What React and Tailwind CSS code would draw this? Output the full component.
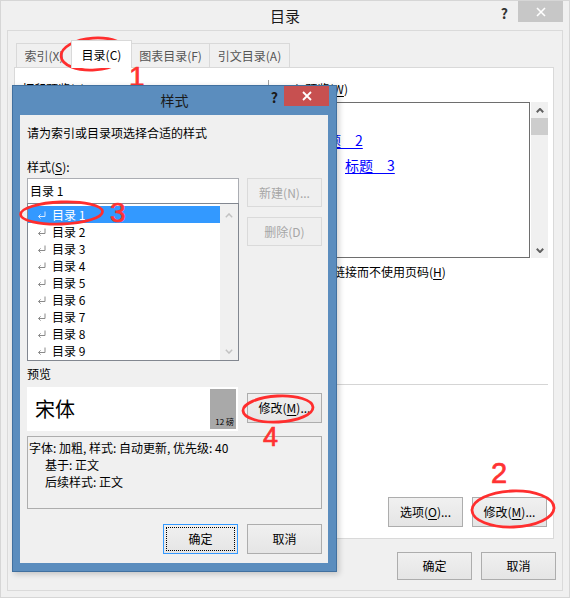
import React from "react";

const U = ({ children }) => (
  <span className="underline underline-offset-2 decoration-1">{children}</span>
);

const XIcon = ({ size = 10, w = 1.6 }) => (
  <svg width={size} height={size} viewBox="0 0 10 10">
    <path d="M1 1L9 9M9 1L1 9" stroke="white" strokeWidth={w} fill="none" />
  </svg>
);

const Chevron = ({ up, w = 8, h = 5, sw = 2, color = "#606060" }) => (
  <svg width={w} height={h} viewBox={`0 0 ${w} ${h}`}>
    <path
      d={up ? `M0.8 ${h - 0.8}L${w / 2} 0.9L${w - 0.8} ${h - 0.8}` : `M0.8 0.8L${w / 2} ${h - 0.9}L${w - 0.8} 0.8`}
      stroke={color}
      strokeWidth={sw}
      fill="none"
    />
  </svg>
);

const Ret = () => (
  <svg width="9" height="8" viewBox="0 0 9 8" className="shrink-0">
    <path d="M8 0.5V5.5H1.5" stroke="currentColor" strokeWidth="1" fill="none" />
    <path d="M3.6 3.4L1.5 5.5L3.6 7.6" stroke="currentColor" strokeWidth="1" fill="none" />
  </svg>
);

function Btn({ children, className = "" }) {
  return (
    <div
      className={
        "flex items-center justify-center w-[75px] border border-[#adadad] bg-linear-to-b from-[#f0f0f0] to-[#e5e5e5] text-[12px] text-black " +
        className
      }
    >
      {children}
    </div>
  );
}

function DisabledBtn({ children, className = "" }) {
  return (
    <div
      className={
        "flex items-center justify-center w-[75px] border border-[#dadada] bg-[#efefef] text-[12px] text-[#a6a6a6] " +
        className
      }
    >
      {children}
    </div>
  );
}

export default function App() {
  const rows = [1, 2, 3, 4, 5, 6, 7, 8, 9];
  return (
    <div className="relative w-[570px] h-[598px] overflow-hidden bg-[#f0f0f0] p-px shadow-[inset_0_0_0_1px_#d6d6d6] text-black font-['Noto_Sans_CJK_SC',sans-serif] text-[12px] leading-[16px]">
      {/* Main title bar */}
      <div className="grid grid-cols-[1fr_auto_1fr] h-[29px]">
        <div />
        <div className="text-[15px] leading-[29px] text-[#1a1a1a]">目录</div>
        <div className="flex justify-end items-start pr-[6px]">
          <span className="font-bold text-[14px] leading-[20px] mt-[2px] mr-[10px] text-[#333]">?</span>
          <div className="w-[45px] h-[21px] bg-[#c7c7c7] flex items-center justify-center">
            <XIcon />
          </div>
        </div>
      </div>

      {/* Main frame */}
      <div className="ml-[6px] w-[556px] h-[561px] border border-[#dadada] flex flex-col">
        {/* Tabs */}
        <div className="flex items-end h-[25px] mt-[11px] ml-[8px]">
          <div className="w-[56px] h-[24px] border border-b-0 border-[#d9d9d9] bg-[#f0f0f0] flex items-center justify-center text-[#555]">
            索引(X)
          </div>
          <div className="relative z-10 -ml-px -mb-px w-[61px] h-[28px] border border-b-0 border-[#d9d9d9] bg-white flex items-center justify-center pt-[1px]">
            目录(C)
          </div>
          <div className="-ml-px w-[79px] h-[24px] border border-b-0 border-[#d9d9d9] bg-[#f0f0f0] flex items-center justify-center text-[#555]">
            图表目录(F)
          </div>
          <div className="-ml-px w-[81px] h-[24px] border border-b-0 border-[#d9d9d9] bg-[#f0f0f0] flex items-center justify-center text-[#555]">
            引文目录(A)
          </div>
        </div>

        {/* Tab panel */}
        <div className="ml-[6px] w-[540px] h-[472px] bg-white border border-[#d9d9d9] flex flex-col">
          <div className="flex h-[316px]">
            <div className="w-[253px] pl-[7px] pt-[13px]">
              打印预览(<U>V</U>)
            </div>
            <div className="w-px h-[20px] mt-[12px] bg-[#a0a0a0]" />
            <div className="flex flex-col pl-[8px] pt-[13px]">
              <div className="ml-[1px]">
                Web 预览(<U>W</U>)
              </div>
              <div className="flex mt-[5px]">
                <div className="w-[253px] h-[156px] border border-[#6e6e6e] pl-[3px] text-[14px] leading-[25px] text-[#0000ff]">
                  <div>
                    <span className="underline underline-offset-2">标题{"\u3000"}1</span>
                  </div>
                  <div className="pl-[32px]">
                    <span className="underline underline-offset-2">标题{"\u3000"}2</span>
                  </div>
                  <div className="pl-[64px]">
                    <span className="underline underline-offset-2">标题{"\u3000"}3</span>
                  </div>
                </div>
                <div className="ml-[1px] w-[17px] h-[156px] bg-[#f0f0f0] flex flex-col">
                  <div className="h-[16px] flex items-center justify-center">
                    <Chevron up />
                  </div>
                  <div className="h-[17px] bg-[#cdcdcd]" />
                  <div className="flex-1" />
                  <div className="h-[16px] flex items-center justify-center">
                    <Chevron />
                  </div>
                </div>
              </div>
              <div className="flex items-center mt-[6px] h-[16px]">
                <div className="ml-[1px] w-[13px] h-[13px] border border-[#333] bg-white" />
                <span className="ml-[6px]">
                  使用超链接而不使用页码(<U>H</U>)
                </span>
              </div>
            </div>
          </div>
          <div className="ml-[7px] w-[526px] h-px bg-[#d5d5d5]" />
          <div className="flex-1" />
          <div className="flex justify-end gap-[9px] pr-[6px] pb-[11px]">
            <Btn className="h-[30px]">
              选项(<U>O</U>)...
            </Btn>
            <Btn className="h-[30px] border-[#4a9de6]">
              修改(<U>M</U>)...
            </Btn>
          </div>
        </div>

        {/* Main bottom buttons */}
        <div className="flex justify-end gap-[9px] mt-[13px] pr-[6px]">
          <Btn className="h-[28px]">确定</Btn>
          <Btn className="h-[28px]">取消</Btn>
        </div>
      </div>

      {/* Annotations under the style dialog */}
      <svg className="absolute left-0 top-0 pointer-events-none" width="570" height="598">
        <ellipse cx="94" cy="54" rx="33" ry="16" stroke="#ff2e2e" strokeWidth="2.8" fill="none" transform="rotate(-4 94 54)" />
        <ellipse cx="513" cy="509" rx="41" ry="18" stroke="#ff2e2e" strokeWidth="2.8" fill="none" transform="rotate(-2 513 509)" />
      </svg>
      <div className="absolute left-[129px] top-[63px] font-['Liberation_Sans',sans-serif] text-[28px] leading-none text-[#ff3333] [-webkit-text-stroke:0.7px_#ff3333]">1</div>
      <div className="absolute left-[491px] top-[459px] font-['Liberation_Sans',sans-serif] text-[29px] leading-none text-[#ff3333] [-webkit-text-stroke:0.7px_#ff3333]">2</div>

      {/* Style dialog */}
      <div className="absolute left-[12px] top-[85px] z-10 w-[325px] h-[487px] bg-[#5b8dbe] border border-[#41709f] shadow-[2px_2px_6px_rgba(0,0,0,0.2)] flex flex-col">
        <div className="grid grid-cols-[1fr_auto_1fr] h-[29px]">
          <div />
          <div className="text-[14px] leading-[29px] text-[#1a1a1a]">样式</div>
          <div className="flex justify-end items-start">
            <span className="font-bold text-[14px] leading-[20px] mt-[1px] mr-[6px] text-[#1a1a1a]">?</span>
            <div className="w-[45px] h-[20px] mr-[7px] bg-[#c75050] flex items-center justify-center">
              <XIcon size={10} w={1.8} />
            </div>
          </div>
        </div>
        <div className="flex-1 ml-[7px] mr-[8px] mb-[8px] bg-[#f0f0f0] flex flex-col pl-[7px] pr-[6px]">
          <div className="mt-[10px]">请为索引或目录项选择合适的样式</div>
          <div className="mt-[18px]">
            样式(<U>S</U>):
          </div>
          <div className="flex mt-[3px]">
            <div className="w-[212px] flex flex-col">
              <div className="h-[25px] border border-b-0 border-[#abadb3] bg-white pl-[2px] leading-[24px]">目录 1</div>
              <div className="h-[158px] border border-[#828790] bg-white flex">
                <div className="flex-1 pt-[2px]">
                  {rows.map((n) => (
                    <div
                      key={n}
                      className={
                        n === 1
                          ? "h-[17px] flex items-center pl-[9px] bg-[#3399ff] text-white"
                          : "h-[17px] flex items-center pl-[9px] text-black"
                      }
                    >
                      <span className={n === 1 ? "text-[#d8e9ff]" : "text-[#8a8a8a]"}>
                        <Ret />
                      </span>
                      <span className="ml-[6px]">目录 {n}</span>
                    </div>
                  ))}
                </div>
                <div className="w-[18px] bg-[#f0f0f0] flex flex-col justify-between items-center pt-[9px] pb-[6px]">
                  <Chevron up w={8} h={5} sw={1.4} color="#c2c2c2" />
                  <Chevron w={8} h={5} sw={1.4} color="#c2c2c2" />
                </div>
              </div>
            </div>
            <div className="ml-[8px] flex flex-col">
              <DisabledBtn className="h-[29px]">新建(N)...</DisabledBtn>
              <DisabledBtn className="h-[29px] mt-[10px]">删除(D)</DisabledBtn>
            </div>
          </div>
          <div className="mt-[5px]">预览</div>
          <div className="flex mt-[5px]">
            <div className="w-[211px] h-[44px] bg-white p-[2px] flex">
              <div className="flex-1 flex items-center pl-[6px] text-[20px] leading-[24px]">宋体</div>
              <div className="w-[26px] bg-[#a9a9a9] flex items-end justify-end pr-[2px] pb-[2px] text-[8px] leading-[10px]">
                12 磅
              </div>
            </div>
            <Btn className="h-[30px] mt-[6px] ml-[9px]">
              修改(<U>M</U>)...
            </Btn>
          </div>
          <div className="mt-[5px] w-[295px] h-[73px] border border-[#adadad] pt-[2px] pl-[1px] leading-[17px]">
            <div>字体: 加粗, 样式: 自动更新, 优先级: 40</div>
            <div className="pl-[16px]">基于: 正文</div>
            <div className="pl-[16px]">后续样式: 正文</div>
          </div>
          <div className="flex justify-end gap-[9px] mt-[15px]">
            <div className="w-[75px] h-[30px] border border-[#3399ff] bg-linear-to-b from-[#f0f0f0] to-[#e5e5e5] p-[2px] flex">
              <div className="flex-1 border border-dotted border-black flex items-center justify-center">确定</div>
            </div>
            <Btn className="h-[30px]">取消</Btn>
          </div>
        </div>
      </div>

      {/* Annotations over the style dialog */}
      <svg className="absolute left-0 top-0 z-20 pointer-events-none" width="570" height="598">
        <ellipse cx="61.5" cy="213" rx="41" ry="11" stroke="#ff2e2e" strokeWidth="2.8" fill="none" transform="rotate(-2 61.5 213)" />
        <ellipse cx="278" cy="409" rx="35" ry="13" stroke="#ff2e2e" strokeWidth="2.8" fill="none" transform="rotate(-3 278 409)" />
      </svg>
      <div className="absolute z-20 left-[110px] top-[199px] font-['Liberation_Sans',sans-serif] text-[28px] leading-none text-[#ff3333] [-webkit-text-stroke:0.7px_#ff3333]">3</div>
      <div className="absolute z-20 left-[263px] top-[424px] font-['Liberation_Sans',sans-serif] text-[27px] leading-none text-[#ff3333] [-webkit-text-stroke:0.7px_#ff3333]">4</div>
    </div>
  );
}
